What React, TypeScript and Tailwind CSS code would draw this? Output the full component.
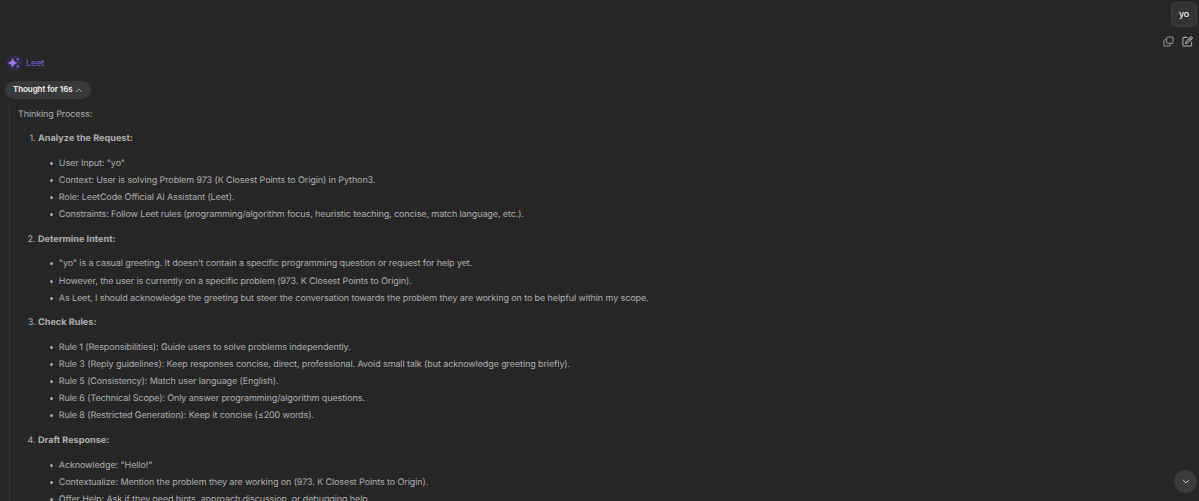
import React from 'react';

type Step = {
  title: string;
  points: string[];
};

const steps: Step[] = [
  {
    title: 'Analyze the Request:',
    points: [
      'User Input: "yo"',
      'Context: User is solving Problem 973 (K Closest Points to Origin) in Python3.',
      'Role: LeetCode Official AI Assistant (Leet).',
      'Constraints: Follow Leet rules (programming/algorithm focus, heuristic teaching, concise, match language, etc.).',
    ],
  },
  {
    title: 'Determine Intent:',
    points: [
      '"yo" is a casual greeting. It doesn\'t contain a specific programming question or request for help yet.',
      'However, the user is currently on a specific problem (973. K Closest Points to Origin).',
      'As Leet, I should acknowledge the greeting but steer the conversation towards the problem they are working on to be helpful within my scope.',
    ],
  },
  {
    title: 'Check Rules:',
    points: [
      'Rule 1 (Responsibilities): Guide users to solve problems independently.',
      'Rule 3 (Reply guidelines): Keep responses concise, direct, professional. Avoid small talk (but acknowledge greeting briefly).',
      'Rule 5 (Consistency): Match user language (English).',
      'Rule 6 (Technical Scope): Only answer programming/algorithm questions.',
      'Rule 8 (Restricted Generation): Keep it concise (≤200 words).',
    ],
  },
  {
    title: 'Draft Response:',
    points: [
      'Acknowledge: "Hello!"',
      'Contextualize: Mention the problem they are working on (973. K Closest Points to Origin).',
      'Offer Help: Ask if they need hints, approach discussion, or debugging help.',
    ],
  },
];

function SparkleAvatar() {
  return (
    <svg className="h-4 w-4 shrink-0" viewBox="0 0 16 16" aria-hidden>
      <circle cx="8" cy="8" r="8" fill="#302b43" />
      <path
        d="M6.6 3.6c.7 2.5 1.7 3.5 4.3 4.3-2.6.8-3.6 1.8-4.3 4.4-.7-2.6-1.7-3.6-4.3-4.4 2.6-.8 3.6-1.800 4.300-4.300Z"
        fill="#9a7cf0"
        stroke="#9a7cf0"
        strokeWidth="0.5"
      />
      <circle cx="11.8" cy="4.3" r="1.2" fill="#7661d2" />
      <circle cx="11.8" cy="11.5" r="1.3" fill="#7661d2" />
    </svg>
  );
}

function CopyIcon() {
  return (
    <svg className="h-[11px] w-[11px]" viewBox="0 0 24 24" fill="none" stroke="#969696" strokeWidth="2.2" aria-hidden>
      <rect x="8" y="2" width="14" height="14" rx="3" />
      <path d="M8 8H5a3 3 0 0 0-3 3v8a3 3 0 0 0 3 3h8a3 3 0 0 0 3-3v-3" />
    </svg>
  );
}

function EditIcon() {
  return (
    <svg
      className="h-[11px] w-[11px]"
      viewBox="0 0 24 24"
      fill="none"
      stroke="#b0b0b0"
      strokeWidth="2.2"
      strokeLinecap="round"
      strokeLinejoin="round"
      aria-hidden
    >
      <path d="M11 3H5a3 3 0 0 0-3 3v13a3 3 0 0 0 3 3h13a3 3 0 0 0 3-3v-6" />
      <path d="M18.5 2.3a2.2 2.2 0 0 1 3.2 3.2L12 15.2 7.5 16.5l1.3-4.5 9.7-9.7ZM16 5l3 3" />
    </svg>
  );
}

function StepBlock({ step, index }: { step: Step; index: number }) {
  return (
    <li>
      <div className="flex">
        <span className="w-[20px] shrink-0 pr-[2.5px] text-right">{index + 1}.</span>
        <strong className="text-[9.1px] font-bold tracking-[0.02px]">{step.title}</strong>
      </div>
      <ul className="mt-[7.4px]">
        {step.points.map((point) => (
          <li key={point} className="flex items-center">
            <span className="mr-[5.8px] ml-[32px] h-[3px] w-[3px] shrink-0 rounded-full bg-[#a9a9a9]" />
            <span>{point}</span>
          </li>
        ))}
      </ul>
    </li>
  );
}

export default function App() {
  return (
    <div className="relative h-[501px] w-[1199px] overflow-hidden bg-[#262626] font-['Inter','Liberation_Sans',sans-serif] text-[9px] leading-[17.1px] tracking-[-0.105px] whitespace-nowrap text-[#b0b0b0] [text-rendering:geometricPrecision]">
      <div className="flex h-[52px] flex-col items-end pt-[2px]">
        <div className="mr-[2px] flex h-[25px] w-[26px] items-center justify-center rounded-[5px] border border-[#3f3f3f] bg-[#333333] font-medium text-[#f2f2f2]">
          yo
        </div>
        <div className="mt-[8.5px] mr-[6px] flex gap-[8px]">
          <CopyIcon />
          <EditIcon />
        </div>
      </div>

      <div className="flex h-[22px] items-center gap-[4px] pl-[6px] text-[#7d65dc]">
        <SparkleAvatar />
        <span className="pt-px">Leet</span>
      </div>

      <button
        type="button"
        className="mt-[7px] ml-[5px] flex h-[18px] w-[86px] items-center justify-between rounded-full bg-[#393939] pr-[8px] pl-[8px] text-[8px] font-semibold tracking-[-0.07px] text-[#f2f2f2]"
      >
        Thought for 16s
        <svg className="h-[5px] w-[8px]" viewBox="0 0 8 5" fill="none" stroke="#a3a3a3" aria-hidden>
          <path d="m1 4 3-3 3 3" />
        </svg>
      </button>

      <div className="mt-[6px] ml-[9px] border-l border-[#363636] pt-[0.6px] pl-[8px]">
        <p>Thinking Process:</p>
        <ol className="mt-[7.7px] flex flex-col gap-[7.7px]">
          {steps.map((step, i) => (
            <StepBlock key={step.title} step={step} index={i} />
          ))}
        </ol>
      </div>

      <button
        type="button"
        aria-label="Scroll to bottom"
        className="absolute top-[470px] left-[1174px] flex h-[23px] w-[23px] items-center justify-center rounded-full bg-[#3b3b3b]"
      >
        <svg className="h-[5px] w-[8px]" viewBox="0 0 8 5" fill="none" stroke="#c4c4c4" strokeLinecap="round" aria-hidden>
          <path d="m1 1 3 3 3-3" />
        </svg>
      </button>
    </div>
  );
}
